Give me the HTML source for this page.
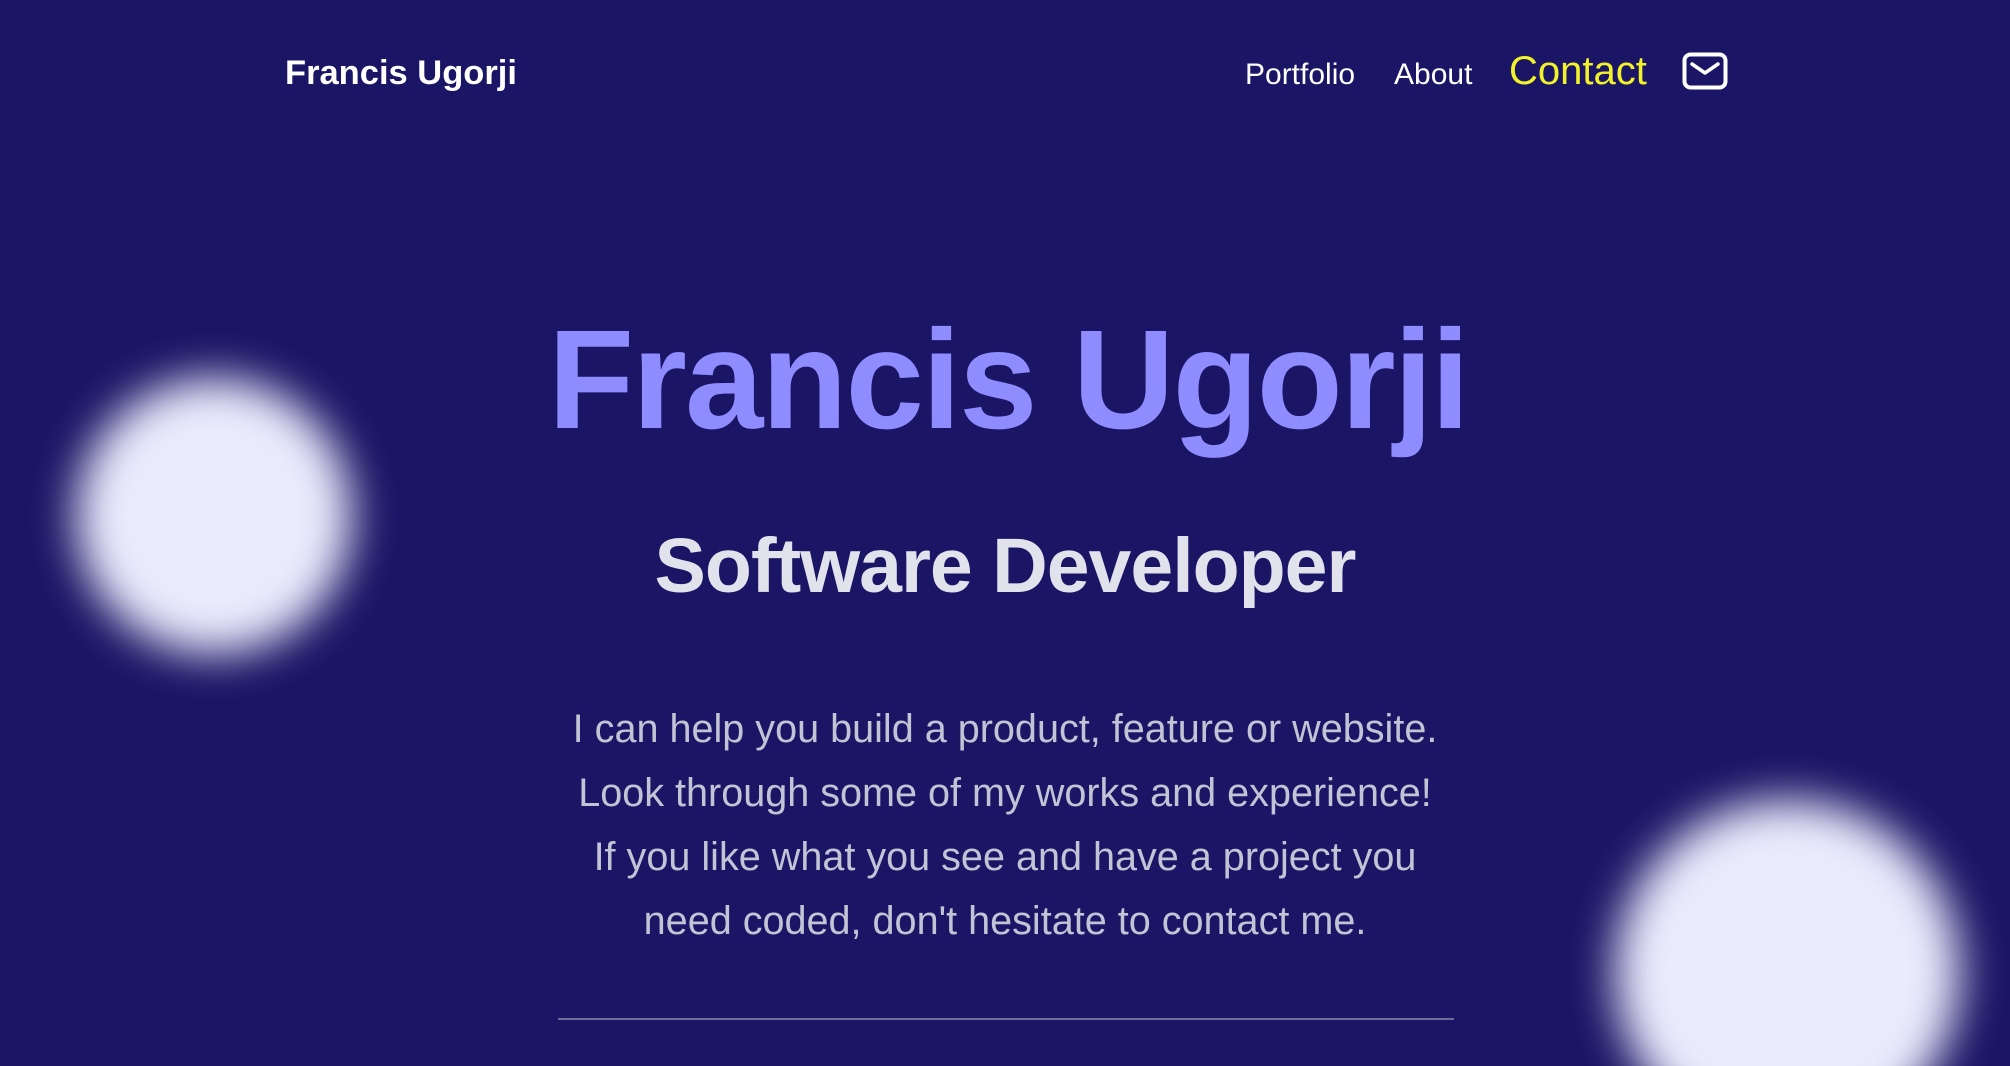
<!DOCTYPE html>
<html><head><meta charset="utf-8"><style>
html,body{margin:0;padding:0;width:2010px;height:1066px;overflow:hidden;background:#1a1565;font-family:"Liberation Sans",Arial,sans-serif;position:relative}
.blob{position:absolute;border-radius:50%;background:#ecebfd;filter:blur(22px)}
.t{position:absolute;white-space:nowrap}
</style></head><body>
<div style="position:absolute;left:0;top:0;width:2010px;height:1066px;overflow:hidden">
<div class="blob" style="left:76px;top:378px;width:276px;height:276px"></div>
<div class="blob" style="left:1615px;top:800px;width:345px;height:345px"></div>
</div>
<div class="t" style="left:285px;top:54px;font-size:34.5px;font-weight:bold;color:#fff">Francis Ugorji</div>
<div class="t" style="left:1245px;top:58px;font-size:30px;color:#fff">Portfolio</div>
<div class="t" style="left:1394px;top:58px;font-size:30px;color:#fff">About</div>
<div class="t" style="left:1509px;top:49px;font-size:40px;color:#f2f22a">Contact</div>
<svg class="t" style="left:1682px;top:52px" width="46" height="38" viewBox="0 0 46 38"><rect x="2.5" y="2.5" width="41" height="33" rx="6" fill="none" stroke="#fff" stroke-width="4"/><path d="M10 12 L23 21 L36 12" fill="none" stroke="#fff" stroke-width="3.5" stroke-linecap="round" stroke-linejoin="round"/></svg>
<div style="position:absolute;left:0;width:2010px;top:294px;text-align:center;font-size:141px;font-weight:bold;color:#8f8cff;line-height:170px;margin-left:3px;letter-spacing:-2px">Francis Ugorji</div>
<div style="position:absolute;left:0;width:2010px;top:516px;text-align:center;font-size:77px;font-weight:bold;color:#e2e2ec;line-height:100px;letter-spacing:-1px">Software Developer</div>
<div style="position:absolute;left:0;width:2010px;top:697px;text-align:center;font-size:39.6px;color:#c3c3d6;line-height:64px">I can help you build a product, feature or website.<br>Look through some of my works and experience!<br>If you like what you see and have a project you<br>need coded, don't hesitate to contact me.</div>
<div style="position:absolute;left:558px;top:1018px;width:896px;height:2px;background:#6f6d98"></div>
</body></html>
